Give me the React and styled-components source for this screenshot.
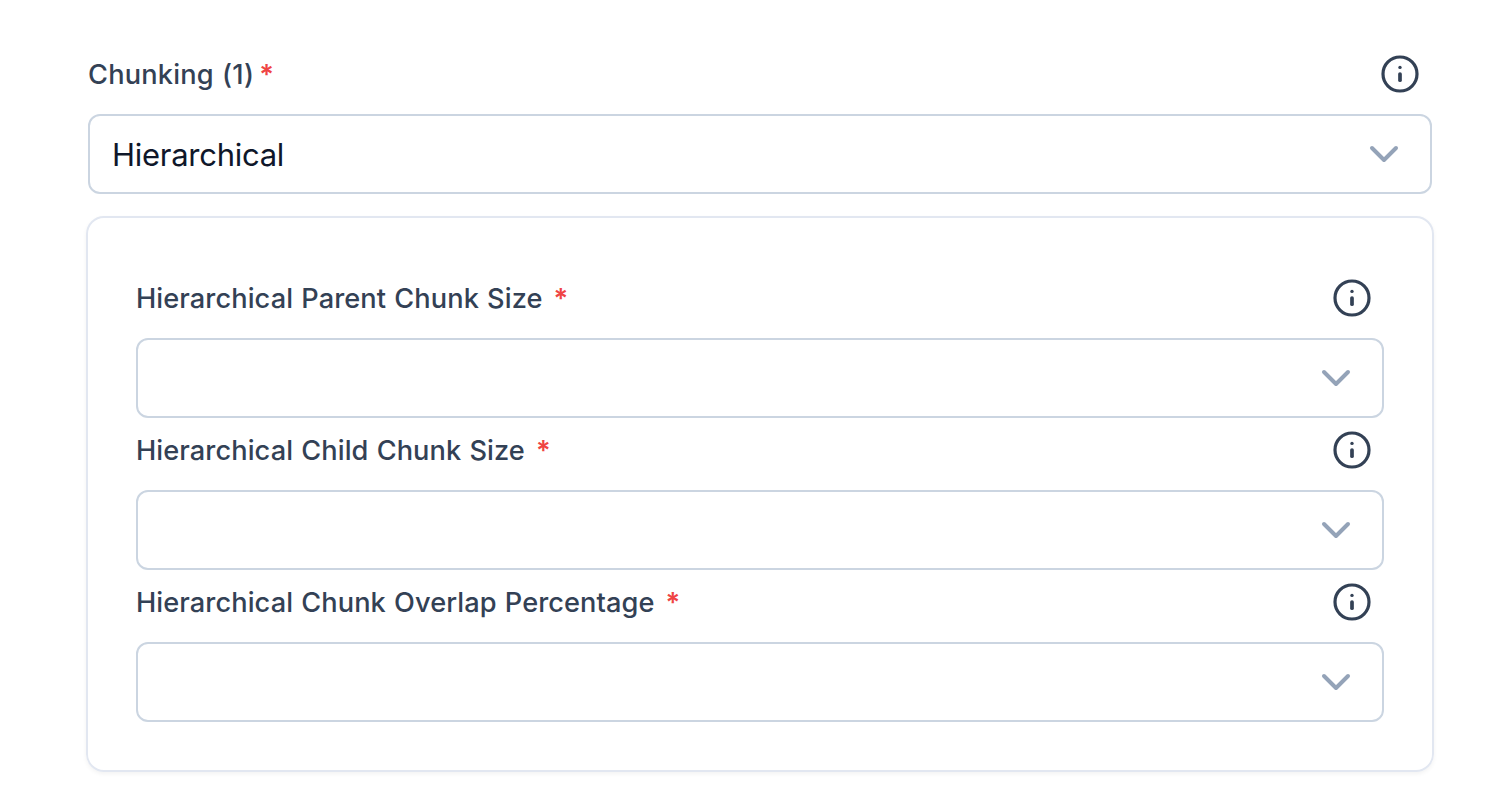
import React from "react";
import styled, { createGlobalStyle } from "styled-components";

const Global = createGlobalStyle`
  * { box-sizing: border-box; }
  body { margin: 0; background: #fff; font-family: Inter, "Liberation Sans", sans-serif; }
`;

const Page = styled.main`
  height: 792px;
  padding: 42px 80px 0 88px;
  overflow: hidden;
`;

const Field = styled.div`
  display: flex;
  flex-direction: column;
`;

const LabelRow = styled.div`
  height: 64px;
  margin-bottom: 8px;
  display: flex;
  align-items: center;
  justify-content: space-between;
  padding-right: 12px;
`;

const Label = styled.label`
  display: flex;
  align-items: center;
  white-space: pre;
  padding-top: 1px;
  font-size: 27.2px;
  line-height: 40px;
  font-weight: 480;
  color: #334155;
  letter-spacing: ${(p) => p.$spacing}px;
  word-spacing: 0.8px;
`;

const Star = styled.span`
  color: #ef4444;
  font-weight: 600;
  margin-left: ${(p) => p.$gap}px;
  letter-spacing: 0;
`;

const Select = styled.div`
  height: 80px;
  border: 2px solid #cbd5e1;
  border-radius: 12px;
  display: flex;
  align-items: center;
  justify-content: space-between;
  padding: 0 30px 0 22px;
`;

const Value = styled.span`
  padding-top: 1px;
  font-size: 31px;
  line-height: 48px;
  letter-spacing: -0.27px;
  color: #0f172a;
`;

const Top = styled.div`
  width: 1344px;
`;

const Card = styled.section`
  width: 1348px;
  height: 556px;
  margin: 22px 0 0 -2px;
  padding: 48px 48px 0;
  border: 2px solid #e2e7f1;
  border-radius: 18px;
  box-shadow: 0 2px 4px rgba(0, 0, 0, 0.05);
`;

const InfoIcon = () => (
  <svg width="40" height="40" viewBox="0 0 40 40" fill="none" stroke="#334155" strokeLinecap="round">
    <circle cx="20" cy="20" r="17" strokeWidth="3.2" />
    <path d="M20 20V26.2" strokeWidth="3.7" />
    <circle cx="20" cy="13.4" r="1.7" fill="#334155" stroke="none" />
  </svg>
);

const Chevron = () => (
  <svg width="32" height="20" viewBox="0 0 32 20" fill="none" stroke="#94a3b8" strokeWidth="4" strokeLinecap="round" strokeLinejoin="round">
    <path d="M4 4L16 16L28 4" />
  </svg>
);

const SelectField = ({ label, value, gap = 11, spacing = 0.09 }) => (
  <Field>
    <LabelRow>
      <Label $spacing={spacing}>{label}<Star $gap={gap}>*</Star></Label>
      <InfoIcon />
    </LabelRow>
    <Select><Value>{value}</Value><Chevron /></Select>
  </Field>
);

export default function App() {
  return (
    <>
      <Global />
      <Page>
        <Top>
          <SelectField label="Chunking (1)" value="Hierarchical" gap={5} spacing={0.2} />
        </Top>
        <Card>
          <SelectField label="Hierarchical Parent Chunk Size" />
          <SelectField label="Hierarchical Child Chunk Size" />
          <SelectField label="Hierarchical Chunk Overlap Percentage" />
        </Card>
      </Page>
    </>
  );
}
